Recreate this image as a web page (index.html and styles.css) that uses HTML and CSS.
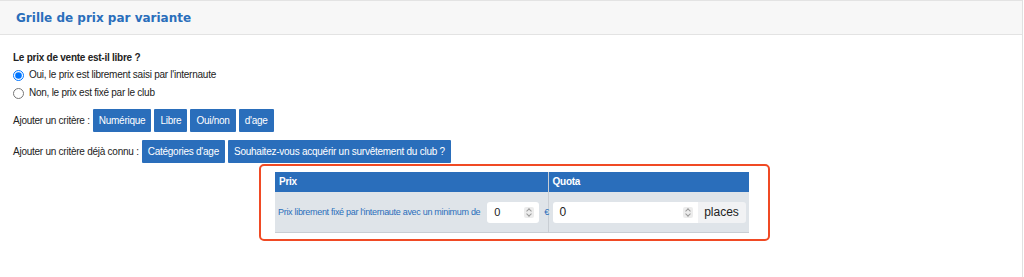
FILE: index.html
```html
<!DOCTYPE html>
<html lang="fr">
<head>
    <meta charset="UTF-8">
    <title>Grille de prix par variante</title>
    <link rel="stylesheet" href="styles.css">
</head>
<body>
    <div class="panel">
        <div class="panel-heading">
            <h3>Grille de prix par variante</h3>
        </div>
        <div class="panel-body">
            <p class="question">Le prix de vente est-il libre ?</p>
            <label class="radio"><input type="radio" name="libre" checked> Oui, le prix est librement saisi par l'internaute</label>
            <label class="radio"><input type="radio" name="libre"> Non, le prix est fixé par le club</label>

            <div class="criteria">
                <span>Ajouter un critère :</span>
                <button>Numérique</button>
                <button>Libre</button>
                <button>Oui/non</button>
                <button>d'age</button>
            </div>
            <div class="criteria">
                <span>Ajouter un critère déjà connu :</span>
                <button>Catégories d'age</button>
                <button>Souhaitez-vous acquérir un survêtement du club ?</button>
            </div>

            <div class="highlight">
                <table class="grid">
                    <thead>
                        <tr>
                            <th class="col-prix">Prix</th>
                            <th>Quota</th>
                        </tr>
                    </thead>
                    <tbody>
                        <tr>
                            <td class="col-prix">
                                <div class="cell">
                                    <span class="hint">Prix librement fixé par l'internaute avec un minimum de</span>
                                    <span class="num small"><span>0</span><i class="spin"></i></span>
                                    <span class="hint">€</span>
                                </div>
                            </td>
                            <td>
                                <div class="input-group">
                                    <span class="num wide"><span>0</span><i class="spin"></i></span>
                                    <span class="addon">places</span>
                                </div>
                            </td>
                        </tr>
                    </tbody>
                </table>
            </div>
        </div>
    </div>
</body>
</html>
```

FILE: styles.css
```css
body {
    margin: 0;
    font-family: "Liberation Sans", Arial, sans-serif;
    font-size: 10px;
    letter-spacing: -0.25px;
    line-height: 12px;
    color: #222;
    background-color: white;
    width: 1023px;
}
.panel {
    border-right: 1px solid #e0e0e0;
    min-height: 277px;
}
.panel-heading {
    background-color: #f7f7f7;
    border-top: 1px solid #e3e3e3;
    border-bottom: 1px solid #e3e3e3;
    height: 33px;
    padding-left: 16px;
    display: flex;
    align-items: center;
}
.panel-heading h3 {
    margin: 0;
    font-family: "DejaVu Sans", Verdana, sans-serif;
    font-size: 12px;
    letter-spacing: 0;
    font-weight: bold;
    color: #2a6ebb;
}
.panel-body {
    padding: 17px 13px 16px;
}
.question {
    margin: 0;
    font-weight: bold;
}
.radio {
    display: flex;
    align-items: center;
    height: 18px;
    margin-top: 2px;
}
.radio + .radio {
    margin-top: 0;
}
.radio input {
    margin: 0 5px 0 0;
    width: 11px;
    height: 11px;
}
.criteria {
    display: flex;
    align-items: center;
    gap: 3px;
    margin-top: 7px;
}
.criteria + .criteria {
    margin-top: 8px;
}
button {
    background-color: #2a6ebb;
    color: white;
    border: none;
    border-radius: 1px;
    font-family: "Liberation Sans", Arial, sans-serif;
    font-size: 10px;
    letter-spacing: -0.25px;
    height: 23px;
    padding: 0 6px;
    cursor: pointer;
}
.highlight {
    width: 474px;
    margin: 1px 0 0 246px;
    border: 2px solid #f04a24;
    border-radius: 5px;
    padding: 6px 19px 6px 14px;
}
.grid {
    width: 474px;
    table-layout: fixed;
    border-collapse: collapse;
    border-bottom: 1px solid #c9ced4;
}
.grid th {
    background-color: #2a6ebb;
    color: white;
    text-align: left;
    font-size: 10px;
    height: 20px;
    padding: 0 4px;
}
.grid td {
    background-color: #dfe4e9;
    height: 40px;
    padding: 0 3px;
}
.grid .col-prix {
    width: 273px;
    box-sizing: border-box;
    border-right: 1px solid #c9ced4;
}
.cell {
    display: flex;
    align-items: center;
    gap: 5px;
}
.hint {
    color: #2a6ebb;
    font-size: 9px;
    letter-spacing: -0.3px;
    white-space: nowrap;
}
.num {
    display: flex;
    align-items: center;
    justify-content: space-between;
    background-color: white;
    border-radius: 3px;
    height: 21px;
    padding: 0 5px 0 7px;
    font-size: 11px;
    color: #222;
    box-sizing: border-box;
    flex-shrink: 0;
}
.num.small {
    width: 52px;
    margin-left: 2px;
}
.num.wide {
    width: 145px;
    font-size: 12px;
    margin-left: 1px;
    border-radius: 3px 0 0 3px;
}
.spin {
    width: 10px;
    height: 11px;
    background-color: #ececec;
    border-radius: 2px;
    position: relative;
}
.spin::before, .spin::after {
    content: "";
    position: absolute;
    left: 3px;
    width: 3px;
    height: 3px;
    border-left: 1px solid #999;
    border-top: 1px solid #999;
}
.spin::before {
    top: 2px;
    transform: rotate(45deg);
}
.spin::after {
    top: 5px;
    transform: rotate(225deg);
}
.input-group {
    display: flex;
    align-items: center;
}
.addon {
    background-color: #f1f2f4;
    height: 21px;
    line-height: 21px;
    width: 48px;
    text-align: center;
    border-radius: 0 3px 3px 0;
    font-size: 12px;
    letter-spacing: 0;
}
```
